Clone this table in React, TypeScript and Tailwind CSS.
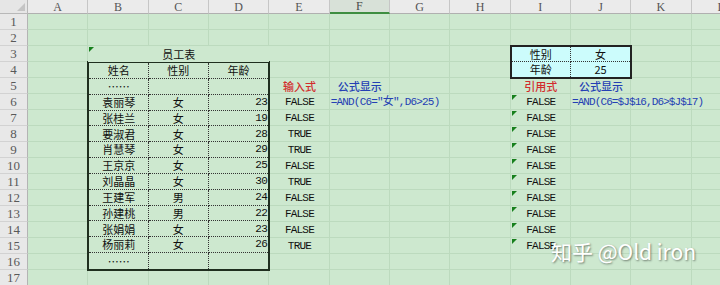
const COLS = ["A", "B", "C", "D", "E", "F", "G", "H", "I", "J", "K", "L"];

// literal class lists so tailwind sees every name
const colStart = [
  "",
  "col-start-1",
  "col-start-2",
  "col-start-3",
  "col-start-4",
  "col-start-5",
  "col-start-6",
  "col-start-7",
  "col-start-8",
  "col-start-9",
  "col-start-10",
  "col-start-11",
  "col-start-12",
  "col-start-13",
];
const rowStart = [
  "",
  "row-start-1",
  "row-start-2",
  "row-start-3",
  "row-start-4",
  "row-start-5",
  "row-start-6",
  "row-start-7",
  "row-start-8",
  "row-start-9",
  "row-start-10",
  "row-start-11",
  "row-start-12",
  "row-start-13",
  "row-start-14",
  "row-start-15",
  "row-start-16",
  "row-start-17",
  "row-start-18",
];

const CJK = "font-['Noto_Sans_CJK_SC',sans-serif]";
const MONO = "font-['Liberation_Mono','Noto_Sans_CJK_SC',monospace]";

const staff = [
  { name: "袁丽琴", sex: "女", age: 23, r: "FALSE" },
  { name: "张桂兰", sex: "女", age: 19, r: "FALSE" },
  { name: "要淑君", sex: "女", age: 28, r: "TRUE" },
  { name: "肖慧琴", sex: "女", age: 29, r: "TRUE" },
  { name: "王京京", sex: "女", age: 25, r: "FALSE" },
  { name: "刘晶晶", sex: "女", age: 30, r: "TRUE" },
  { name: "王建军", sex: "男", age: 24, r: "FALSE" },
  { name: "孙建桃", sex: "男", age: 22, r: "FALSE" },
  { name: "张娟娟", sex: "女", age: 23, r: "FALSE" },
  { name: "杨丽莉", sex: "女", age: 26, r: "TRUE" },
];

function Tri() {
  return (
    <span className="absolute left-px top-px h-0 w-0 border-t-[5px] border-r-[5px] border-t-[#17801d] border-r-transparent" />
  );
}

// row in the sheet -> grid row (header takes row 1)
const gr = (n: number) => rowStart[n + 1];
// column index 1=A -> grid column (row numbers take col 1)
const gc = (n: number) => colStart[n + 1];

export default function App() {
  const tableRows = [
    { name: "姓名", sex: "性别", age: "年龄", head: true },
    { name: "……", sex: "", age: "" },
    ...staff.map((s) => ({ name: s.name, sex: s.sex, age: String(s.age) })),
    { name: "……", sex: "", age: "" },
  ];

  return (
    <div className="relative h-[285px] w-[720px] overflow-hidden bg-[#cde8cf]">
      <div className="grid grid-cols-[28px_repeat(12,60.33px)] grid-rows-[14px_repeat(17,16px)]">
        {/* corner */}
        <div className="col-start-1 row-start-1 relative border-r border-b border-[#b8b8b8] bg-[#e6e6e6]">
          <span className="absolute right-[2px] bottom-[2px] h-0 w-0 border-b-[8px] border-l-[8px] border-b-[#c4c4c4] border-l-transparent" />
        </div>

        {/* column letters */}
        {COLS.map((c, i) =>
          c === "F" ? (
            <div
              key={c}
              className={`${gc(i + 1)} row-start-1 flex items-center justify-center border-r border-[#c6c6c6] border-b-2 border-b-[#3e8e41] bg-[#d8e1d8] font-['Liberation_Serif',serif] text-[12px] leading-none text-[#4a4a4a]`}
            >
              {c}
            </div>
          ) : (
            <div
              key={c}
              className={`${gc(i + 1)} row-start-1 flex items-center justify-center border-r border-b border-[#c6c6c6] border-b-[#b0b0b0] bg-[#ebebeb] font-['Liberation_Serif',serif] text-[12px] leading-none text-[#555]`}
            >
              {c}
            </div>
          )
        )}

        {/* row numbers + gridlines */}
        {Array.from({ length: 17 }, (_, r) => (
          <div
            key={"rn" + r}
            className={`col-start-1 ${gr(r + 1)} flex items-center justify-center border-b border-[#d2d2d2] border-r border-r-[#b4b4b4] bg-[#e8e8e8] font-['Liberation_Serif',serif] text-[13px] leading-none text-[#595959]`}
          >
            {r + 1}
          </div>
        ))}
        {Array.from({ length: 17 }, (_, r) =>
          COLS.map((c, i) => (
            <div
              key={c + r}
              className={`${gc(i + 1)} ${gr(r + 1)} border-r border-b border-[#bcdabe]`}
            />
          ))
        )}

        {/* 员工表 title, B3:D3 merged */}
        <div
          className={`col-start-3 col-span-3 row-start-4 relative flex items-center justify-center bg-[#cde8cf] ${CJK} text-[11px] text-[#111]`}
        >
          <Tri />
          员工表
        </div>

        {/* staff table B4:D16 */}
        <div className="col-start-3 col-span-3 row-start-5 row-span-13 -m-px grid grid-cols-3 grid-rows-13 border-2 border-[#1f2f1f] bg-[#cde8cf]">
          {tableRows.map((t, i) => {
            const last = i === tableRows.length - 1;
            const rb = last ? "" : "border-b";
            return [
              <div
                key={"n" + i}
                className={`flex items-center justify-center border-r ${rb} border-dotted border-[#333] ${CJK} text-[11px] text-[#111]`}
              >
                {t.name}
              </div>,
              <div
                key={"s" + i}
                className={`flex items-center justify-center border-r ${rb} border-dotted border-[#333] ${CJK} text-[11px] text-[#111]`}
              >
                {t.sex}
              </div>,
              <div
                key={"a" + i}
                className={`flex items-center ${t.head ? `justify-center ${CJK} text-[11px]` : `justify-end pr-[1px] ${MONO} text-[11px] tracking-[-0.6px]`} ${rb} border-dotted border-[#333] text-[#111]`}
              >
                {t.age}
              </div>,
            ];
          })}
        </div>

        {/* 输入式 column */}
        <div
          className={`${gc(5)} ${gr(5)} flex items-center justify-center ${CJK} text-[11px] font-medium text-[#d22c2c]`}
        >
          输入式
        </div>
        <div
          className={`${gc(6)} ${gr(5)} flex items-center justify-center ${CJK} text-[11px] font-medium text-[#2440b4]`}
        >
          公式显示
        </div>
        {staff.map((s, i) => (
          <div
            key={"e" + i}
            className={`${gc(5)} ${gr(6 + i)} flex items-center justify-center ${MONO} text-[11px] tracking-[-0.8px] text-[#111]`}
          >
            {s.r}
          </div>
        ))}
        <div
          className={`${gc(6)} ${gr(6)} flex items-center whitespace-nowrap pl-[1px] ${MONO} text-[11px] tracking-[-0.8px] text-[#2440b4]`}
        >
          =AND(C6="女",D6&gt;25)
        </div>

        {/* lookup table I3:J4 */}
        <div className="col-start-10 col-span-2 row-start-4 row-span-2 -m-px grid grid-cols-2 grid-rows-2 border-2 border-[#222] bg-[#ccfcfc] text-[11px] text-[#111]">
          <div className={`flex items-center justify-center border-r border-b border-dotted border-[#333] ${CJK}`}>
            性别
          </div>
          <div className={`flex items-center justify-center border-b border-dotted border-[#333] ${CJK}`}>
            女
          </div>
          <div className={`flex items-center justify-center border-r border-dotted border-[#333] ${CJK}`}>
            年龄
          </div>
          <div className={`flex items-center justify-center ${CJK}`}>25</div>
        </div>

        {/* 引用式 column */}
        <div
          className={`${gc(9)} ${gr(5)} flex items-center justify-center ${CJK} text-[11px] font-medium text-[#d22c2c]`}
        >
          引用式
        </div>
        <div
          className={`${gc(10)} ${gr(5)} flex items-center justify-center ${CJK} text-[11px] font-medium text-[#2440b4]`}
        >
          公式显示
        </div>
        {staff.map((_, i) => (
          <div
            key={"i" + i}
            className={`${gc(9)} ${gr(6 + i)} relative flex items-center justify-center ${MONO} text-[11px] tracking-[-0.8px] text-[#111]`}
          >
            <Tri />
            FALSE
          </div>
        ))}
        <div
          className={`${gc(10)} ${gr(6)} flex items-center whitespace-nowrap pl-[1px] ${MONO} text-[11px] tracking-[-0.9px] text-[#2440b4]`}
        >
          =AND(C6=$J$16,D6&gt;$J$17)
        </div>
      </div>

      {/* watermark */}
      <div className="absolute left-[551px] top-[241px] whitespace-nowrap font-['Noto_Sans_CJK_SC',sans-serif] text-[21px] leading-none text-white [text-shadow:1px_1px_2px_rgba(0,0,0,0.45)]">
        知乎 @Old iron
      </div>
    </div>
  );
}
